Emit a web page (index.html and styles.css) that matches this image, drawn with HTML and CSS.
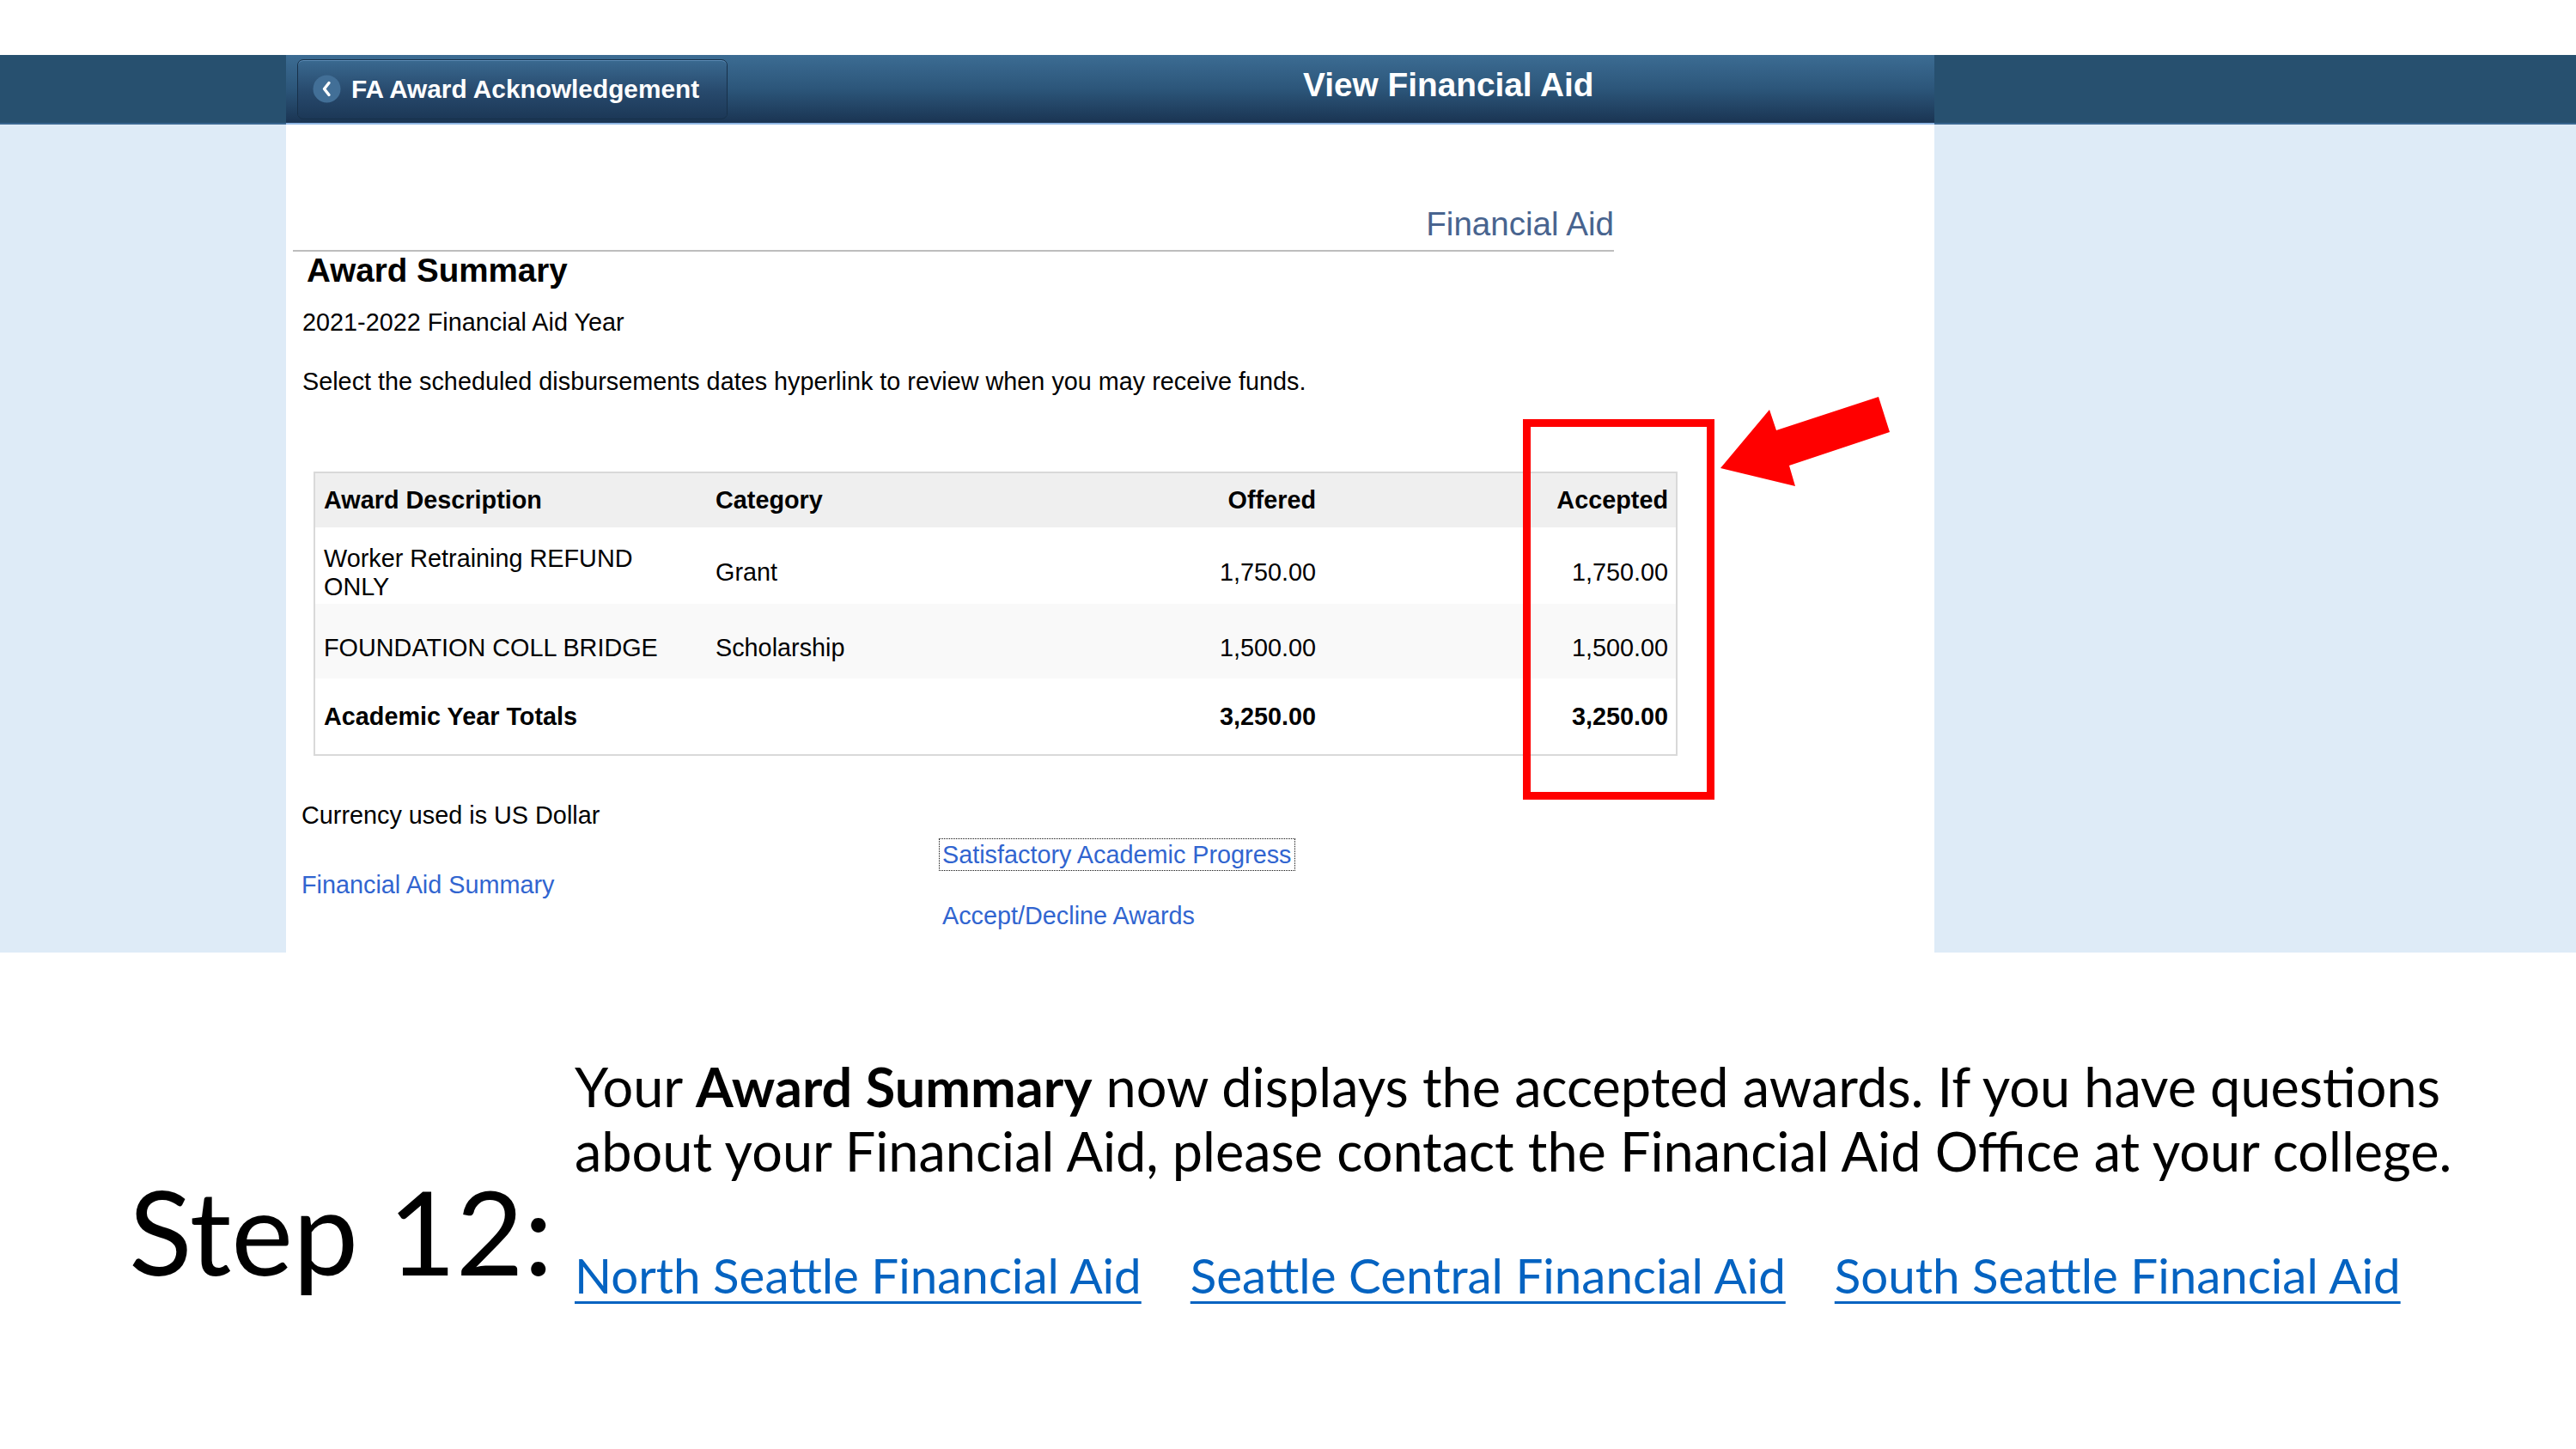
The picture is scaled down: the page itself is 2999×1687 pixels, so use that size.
FILE: index.html
```html
<!DOCTYPE html>
<html lang="en">
<head>
    <meta charset="UTF-8">
    <meta name="viewport" content="width=device-width, initial-scale=1.0">
    <title>View Financial Aid - Step 12</title>
    <link rel="stylesheet" href="styles.css">
</head>
<body>
    <!-- Captura da tela do PeopleSoft -->
    <div class="shell">
        <div class="bar-side"></div>
        <header class="bar">
            <a class="back-btn" href="#">
                <span class="back-icon">
                    <svg viewBox="0 0 33 33" width="33" height="33">
                        <circle cx="16.5" cy="16.5" r="16" fill="#426f97"/>
                        <path d="M19 9.5 L13.5 16.5 L19 23.5" fill="none" stroke="#fff" stroke-width="3.4" stroke-linecap="round" stroke-linejoin="round"/>
                    </svg>
                </span>
                FA Award Acknowledgement
            </a>
            <h1 class="bar-title">View Financial Aid</h1>
        </header>
        <div class="bar-side"></div>

        <div class="side"></div>
        <main class="panel">
            <div class="page-head"><span>Financial Aid</span></div>
            <h2>Award Summary</h2>
            <p class="aid-year">2021-2022 Financial Aid Year</p>
            <p class="hint">Select the scheduled disbursements dates hyperlink to review when you may receive funds.</p>

            <table class="awards">
                <colgroup>
                    <col class="c-desc">
                    <col class="c-cat">
                    <col class="c-off">
                    <col class="c-acc">
                </colgroup>
                <thead>
                    <tr>
                        <th>Award Description</th>
                        <th>Category</th>
                        <th class="num">Offered</th>
                        <th class="num">Accepted</th>
                    </tr>
                </thead>
                <tbody>
                    <tr class="r1">
                        <td>Worker Retraining REFUND ONLY</td>
                        <td>Grant</td>
                        <td class="num">1,750.00</td>
                        <td class="num">1,750.00</td>
                    </tr>
                    <tr class="r2">
                        <td>FOUNDATION COLL BRIDGE</td>
                        <td>Scholarship</td>
                        <td class="num">1,500.00</td>
                        <td class="num">1,500.00</td>
                    </tr>
                    <tr class="total">
                        <td>Academic Year Totals</td>
                        <td></td>
                        <td class="num">3,250.00</td>
                        <td class="num">3,250.00</td>
                    </tr>
                </tbody>
            </table>

            <p class="currency">Currency used is US Dollar</p>

            <div class="links">
                <div class="links-left">
                    <a href="#">Financial Aid Summary</a>
                </div>
                <div class="links-right">
                    <a href="#" class="focused">Satisfactory Academic Progress</a>
                    <a href="#" class="accept">Accept/Decline Awards</a>
                </div>
            </div>

            <!-- destaque vermelho -->
            <div class="callout-box"></div>
            <svg class="callout-arrow" viewBox="0 0 200 110" width="200" height="110">
                <polygon points="3,83 60,15 68,39 187,0 200,41 83,80 90,104" fill="#ff0000"/>
            </svg>
        </main>
        <div class="side"></div>
    </div>

    <!-- Texto do slide -->
    <section class="note">
        <div class="step">Step 12:</div>
        <div class="note-body">
            <p class="note-text">Your <strong>Award Summary</strong> now displays the accepted awards. If you have questions<br>about your Financial Aid, please contact the Financial Aid Office at your college.</p>
            <div class="note-links">
                <a href="#">North Seattle Financial Aid</a>
                <a href="#">Seattle Central Financial Aid</a>
                <a href="#">South Seattle Financial Aid</a>
            </div>
        </div>
    </section>
</body>
</html>
```

FILE: styles.css
```css
body {
    margin: 0;
    background: #fff;
    font-family: "Liberation Sans", Arial, sans-serif;
    color: #000;
}

.shell {
    display: grid;
    grid-template-columns: 333px 1919px 1fr;
    margin-top: 64px;
}

/* Barra de titulo */
.bar-side {
    height: 79px;
    background-color: #27506f;
    border-bottom: 2px solid #3a6790;
}

.bar {
    display: flex;
    align-items: center;
    height: 79px;
    padding-left: 13px;
    background: linear-gradient(#3c6c93, #2c567a 50%, #1a3452);
    border-bottom: 2px solid #8fb6e3;
}

.back-btn {
    display: flex;
    align-items: center;
    gap: 12px;
    box-sizing: border-box;
    width: 501px;
    height: 70px;
    padding-left: 17px;
    border: 1px solid #173049;
    border-radius: 7px;
    background: linear-gradient(#3a6990, #27496c 55%, #1c3857);
    box-shadow: inset 0 1px 0 #5d8db8;
    color: #fff;
    font-size: 29.8px;
    font-weight: bold;
    text-decoration: none;
}

.back-icon {
    display: flex;
}

.bar-title {
    margin: 0 0 10px 670px;
    color: #fff;
    font-size: 38.8px;
    line-height: 38px;
    font-weight: bold;
}

.side {
    background-color: #deebf7;
}

/* Painel principal */
.panel {
    position: relative;
    padding: 94px 0 25px 0;
    font-size: 28.8px;
}

.page-head {
    width: 1538px;
    margin-left: 8px;
    padding-bottom: 8px;
    border-bottom: 2px solid #bdbdbd;
    text-align: right;
    color: #48648f;
    font-size: 38.6px;
    line-height: 44px;
}

.panel h2 {
    margin: 0 0 0 24px;
    font-size: 38.6px;
    line-height: 44px;
}

.aid-year {
    margin: 21px 0 0 19px;
    line-height: 34px;
}

.hint {
    margin: 35px 0 0 19px;
    line-height: 34px;
}

.awards {
    width: 1588px;
    margin: 88px 0 0 32px;
    table-layout: fixed;
    border-collapse: separate;
    border-spacing: 0;
    border: 2px solid #d9d9d9;
}

.c-desc { width: 456px; }
.c-cat { width: 400px; }
.c-off { width: 321px; }
.c-acc { width: 407px; }

.awards th,
.awards td {
    padding: 0 12px 0 10px;
    line-height: 33px;
    text-align: left;
    vertical-align: middle;
}

.awards th {
    height: 63px;
    background-color: #efefef;
}

.awards .num {
    text-align: right;
}

.awards td.num:last-child,
.awards th.num:last-child {
    padding-right: 9px;
}

.r1 td {
    height: 73px;
    padding-top: 16px;
}

.r2 td {
    height: 71px;
    padding-top: 16px;
    background-color: #f9f9f9;
}

.total td {
    height: 88px;
    font-weight: bold;
}

.currency {
    margin: 52px 0 0 18px;
    line-height: 34px;
}

.links {
    display: flex;
    align-items: center;
    margin: 10px 0 0 18px;
    line-height: 36px;
}

.links a {
    color: #3165d0;
    text-decoration: none;
}

.links-left {
    width: 742px;
}

.links-right {
    display: flex;
    flex-direction: column;
    align-items: flex-start;
}

.links-right .focused {
    padding: 0 3px;
    border: 1px dotted #111;
}

.links-right .accept {
    margin-top: 34px;
    padding-left: 4px;
}

/* Destaque vermelho sobre a coluna Accepted */
.callout-box {
    position: absolute;
    left: 1440px;
    top: 343px;
    width: 205px;
    height: 425px;
    border: 9px solid #ff0000;
}

.callout-arrow {
    position: absolute;
    left: 1667px;
    top: 317px;
}

/* Texto do slide */
.note {
    display: flex;
    align-items: flex-end;
    padding: 118px 0 0 150px;
    font-family: Lato, "Open Sans", sans-serif;
}

.step {
    flex: none;
    width: 519px;
    margin-bottom: 6px;
    font-size: 136px;
    line-height: 161px;
}

.note-text {
    margin: 0;
    font-size: 63px;
    line-height: 75px;
    white-space: nowrap;
}

.note-text strong {
    font-weight: bold;
}

.note-links {
    display: flex;
    gap: 57px;
    margin-top: 72px;
    font-size: 56.5px;
    line-height: 70px;
}

.note-links a {
    color: #0563c1;
    text-decoration: underline;
    text-decoration-thickness: 3px;
    text-underline-offset: 9px;
}
```
